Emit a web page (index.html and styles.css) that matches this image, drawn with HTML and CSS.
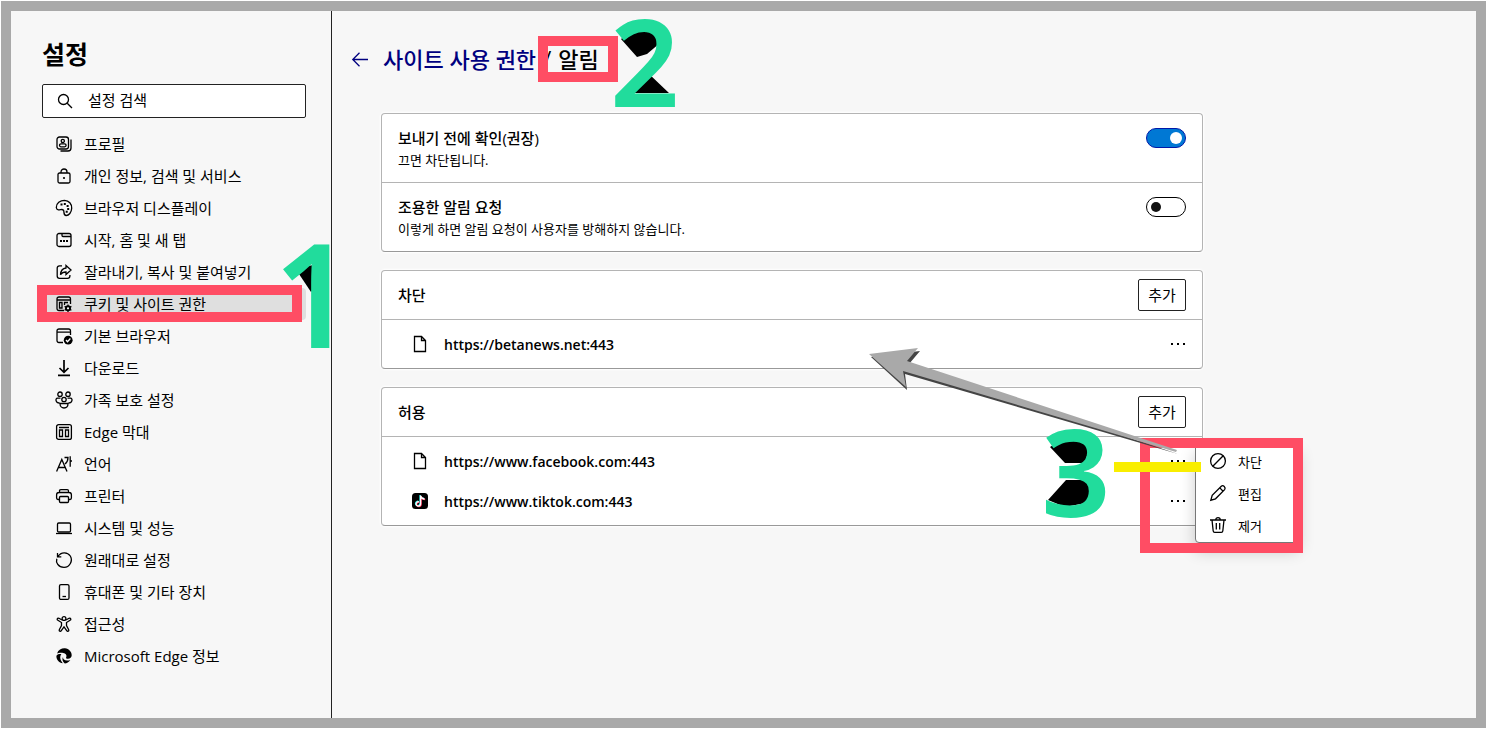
FILE: index.html
```html
<!DOCTYPE html>
<html lang="ko">
<head>
  <meta charset="UTF-8">
  <meta name="viewport" content="width=device-width, initial-scale=1.0">
  <title>설정</title>
  <link rel="stylesheet" href="styles.css">
</head>
<body>
  <div class="page">
    <aside class="sidebar">
      <h1>설정</h1>
      <div class="search">
        <svg class="icon" viewBox="0 0 16 16"><circle cx="6.5" cy="6.5" r="5"/><path d="M10.2 10.2L15 15"/></svg>
        <input type="text" placeholder="설정 검색" aria-label="설정 검색">
      </div>
      <nav class="menu">
        <a href="#"><svg class="icon" viewBox="0 0 16 16"><rect x="1" y="1" width="11.5" height="12" rx="2.5"/><circle cx="6.8" cy="4.9" r="1.6"/><rect x="3.5" y="7.8" width="6.6" height="3" rx="1.5"/><path d="M15 3.5v8.5c0 2-1 3-3 3H4.5"/></svg>프로필</a>
        <a href="#"><svg class="icon" viewBox="0 0 16 16"><rect x="2" y="5" width="12" height="10" rx="1.5"/><path d="M5 5V4c0-4 6-4 6 0v1"/><circle class="solid" cx="8" cy="10" r="1.1"/></svg>개인 정보, 검색 및 서비스</a>
        <a href="#"><svg class="icon" viewBox="0 0 16 16"><path d="M.3 7.5C.1 3 4.300.3 8.500.3c4.500.2 7.400 3.700 7.200 8-.2 4.300-2.900 7.200-5.500 7.200-3.200 0-1.700-3.700-2.700-5.300C6 8.500 4.300 10.200 2.300 9.900 1 9.600.4 8.500.3 7.500z"/><path class="dots" d="M5.500 4.500h.01M8.800 4h.01M11.600 6h.01M12.200 9h.01M10.700 11.800h.01"/></svg>브라우저 디스플레이</a>
        <a href="#"><svg class="icon" viewBox="0 0 16 16"><rect x="1" y="1.5" width="14" height="13" rx="2"/><path d="M6 1.5v2c0 .6.4 1 1 1h8"/><path class="dots" d="M5 9h.01M8 9h.01M11 9h.01"/></svg>시작, 홈 및 새 탭</a>
        <a href="#"><svg class="icon" viewBox="0 0 16 16"><path d="M6 1.8H3.5c-1.500 0-2.300.9-2.300 2.300V12c0 1.500.9 2.400 2.300 2.400h8c1.500 0 2.400-.9 2.400-2.400v-1"/><path d="M10 1.500l5 4.500-5 4.500V8C7.500 8 5.800 8.700 4.500 10.700 4.800 7 6.500 4.300 10 4z"/></svg>잘라내기, 복사 및 붙여넣기</a>
        <a href="#" class="active"><svg class="icon" viewBox="0 0 16 16"><path d="M8 14.500H3c-1.200 0-2-.8-2-2V3c0-1.200.8-2 2-2h9.500c1.200 0 2 .8 2 2v5M1 4h13.500M3.500 6.500h2.500v5.500H3.500zM8.500 9V6.500h3.500"/><circle class="solid" cx="12" cy="12.300" r="3"/><path d="M12 8.500v7.500M8.600 10.400l6.800 3.800M8.600 14.200l6.800-3.800"/><circle class="hole" cx="12" cy="12.300" r="1.100"/></svg>쿠키 및 사이트 권한</a>
        <a href="#"><svg class="icon" viewBox="0 0 16 16"><path d="M7 14.500H3c-1.200 0-2-.8-2-2V3c0-1.200.8-2 2-2h9.500c1.200 0 2 .8 2 2v4M1 4.200h13.500"/><circle class="solid" cx="12.200" cy="12.200" r="4.400"/><path class="tick" d="M10 12l1.500 1.700 2.900-3.200"/></svg>기본 브라우저</a>
        <a href="#"><svg class="icon bold" viewBox="0 0 16 16"><path d="M8 0v12M3.500 8L8 12.300 12.500 8M2 15.400h12"/></svg>다운로드</a>
        <a href="#"><svg class="icon wide" viewBox="0 0 18 18"><circle cx="5" cy="3.200" r="2.200"/><circle cx="13" cy="3.200" r="2.200"/><circle cx="9" cy="8.500" r="2.200"/><path d="M5.500 7.200H2.500C0 7.200.5 12 4.500 12M12.500 7.200h3c2.500 0 2 4.800-2 4.800M5 12.500h8c0 6-8 6-8 0z"/></svg>가족 보호 설정</a>
        <a href="#"><svg class="icon" viewBox="0 0 16 16"><rect x=".6" y=".6" width="14.800" height="14.800" rx="2"/><path d="M3 3.500h10M3.500 6h3v6.500h-3zM9.500 6h3v6.500h-3z"/></svg>Edge 막대</a>
        <a href="#"><svg class="icon" viewBox="0 0 16 16"><path d="M.6 15.500L5.800 3.500 11 15.500M2.500 11.500h6.500M8.500 1.500h3.500c0 3-1 5-3 6.500M14.200.3v10.500M14.200 5H16"/></svg>언어</a>
        <a href="#"><svg class="icon" viewBox="0 0 16 16"><path d="M3.500 4.500V3c0-.8.500-1.300 1.300-1.300h6.400c.8 0 1.300.5 1.300 1.300v1.500M3.500 11.500H2c-.9 0-1.400-.6-1.400-1.400V6.800c0-1.500.8-2.300 2.300-2.300h10.200c1.500 0 2.300.8 2.300 2.300v3.300c0 .8-.5 1.400-1.400 1.400h-1.500"/><rect x="3.500" y="8.500" width="9" height="6" rx="1"/></svg>프린터</a>
        <a href="#"><svg class="icon" viewBox="0 0 16 16"><rect x="1.500" y="3" width="13" height="9" rx="1.200"/><path d="M0 13.500h16"/></svg>시스템 및 성능</a>
        <a href="#"><svg class="icon" viewBox="0 0 16 16"><path d="M1.500 1v3.800h3.800M1.800 4.700C5 -.5 11.500-.3 14.300 4c2.800 4.700-.5 11.400-6.300 11.400S-.4 10.500.8 6.700"/></svg>원래대로 설정</a>
        <a href="#"><svg class="icon" viewBox="0 0 16 16"><rect x="3.500" y=".6" width="9.500" height="14.800" rx="1.500"/><path d="M6.500 12.500h3.500"/></svg>휴대폰 및 기타 장치</a>
        <a href="#"><svg class="icon" viewBox="0 0 16 16"><circle cx="8" cy="2.500" r="1.900"/><path d="M6 4L3 2.300C1.300 1.500.5 3.500 1.900 4.300L5.500 6.500v3L3.300 13.700c-.6 1.500 1.200 2.200 2 .9L8 10.800l2.700 3.800c.8 1.300 2.600.6 2-.9L10.500 9.500v-3l3.600-2.200C15.500 3.500 14.700 1.500 13 2.300L10 4"/></svg>접근성</a>
        <a href="#"><svg class="icon" viewBox="0 0 16 16"><path class="solid" d="M1 5.500C2.500 1.500 6 0 9 .3c4 .4 6.800 3.700 6.700 7-.1 2.300-1.700 3.500-4 3.400-1.500 0-2-.7-1.500-1.500 1-2-.5-4-3-4.300-2.500-.3-5 0-6.200.6zM.4 8c.8-2 3.600-2.300 5-1.700-1.800 1.800-1.600 5.500 1.400 8.900C3 15 .2 11.500.4 8zM7 9c-.3 3 3 4.500 7.300 3-1.500 2.300-3.500 3.500-5.500 3.600C6.500 13.500 5.800 11 7 9z"/></svg>Microsoft Edge 정보</a>
      </nav>
    </aside>

    <main class="content">
      <header class="breadcrumb">
        <button type="button" class="back" aria-label="뒤로"><svg class="icon" viewBox="0 0 16 16"><path d="M16 7.500H.8M7.500.8L.8 7.500l6.700 6.700"/></svg></button>
        <a href="#">사이트 사용 권한</a>
        <span>/</span>
        <h2>알림</h2>
      </header>

      <section class="card">
        <div class="setting">
          <label for="ask">보내기 전에 확인(권장)<small>끄면 차단됩니다.</small></label>
          <input type="checkbox" class="toggle" id="ask" checked>
        </div>
        <div class="setting">
          <label for="quiet">조용한 알림 요청<small>이렇게 하면 알림 요청이 사용자를 방해하지 않습니다.</small></label>
          <input type="checkbox" class="toggle" id="quiet">
        </div>
      </section>

      <section class="card">
        <div class="card-head">
          <h3>차단</h3>
          <button type="button" class="add">추가</button>
        </div>
        <ul class="sites">
          <li>
            <svg class="icon" viewBox="0 0 16 16"><path d="M2.500.5h7l4 4v11h-11zM9.500.5v4h4"/></svg>
            <span>https://betanews.net:443</span>
            <button type="button" class="more" aria-label="기타 작업"><svg class="icon" viewBox="0 0 16 16"><path class="dots" d="M2 8h.01M8 8h.01M14 8h.01"/></svg></button>
          </li>
        </ul>
      </section>

      <section class="card">
        <div class="card-head">
          <h3>허용</h3>
          <button type="button" class="add">추가</button>
        </div>
        <ul class="sites">
          <li>
            <svg class="icon" viewBox="0 0 16 16"><path d="M2.500.5h7l4 4v11h-11zM9.500.5v4h4"/></svg>
            <span>https://www.facebook.com:443</span>
            <button type="button" class="more" aria-label="기타 작업"><svg class="icon" viewBox="0 0 16 16"><path class="dots" d="M2 8h.01M8 8h.01M14 8h.01"/></svg></button>
          </li>
          <li>
            <svg class="icon tiktok" viewBox="0 0 16 16"><rect width="16" height="16" rx="3.500"/><path class="cyan" d="M8 2v8.300c0 3-4.700 2.900-4.500.1.100-1.500 1.400-2.300 2.800-2.100M8 2.500c.5 2 1.900 2.900 4 3"/><path class="red" d="M9.200 3v8.300c0 3-4.700 2.900-4.500.1.100-1.500 1.400-2.300 2.800-2.100M9.200 3.500c.5 2 1.900 2.900 4 3"/><path class="white" d="M8.600 2.500v8.300c0 3-4.700 2.900-4.500.1.100-1.500 1.400-2.300 2.800-2.100M8.600 3c.5 2 1.900 2.900 4 3"/></svg>
            <span>https://www.tiktok.com:443</span>
            <button type="button" class="more" aria-label="기타 작업"><svg class="icon" viewBox="0 0 16 16"><path class="dots" d="M2 8h.01M8 8h.01M14 8h.01"/></svg></button>
          </li>
        </ul>
      </section>
    </main>

    <div class="popup">
      <button type="button"><svg class="icon" viewBox="0 0 16 16"><circle cx="8" cy="8" r="7.400"/><path d="M2.800 13.200L13.200 2.800"/></svg>차단</button>
      <button type="button"><svg class="icon" viewBox="0 0 16 16"><path d="M11.300 1.300c1.800-1.700 5 1 3.300 3.400L5.500 13.800.8 15.200l1.400-4.800zM9.800 2.900l3.300 3.300"/></svg>편집</button>
      <button type="button"><svg class="icon" viewBox="0 0 16 16"><path d="M0 3h16M5.700 3c0-3.300 4.600-3.300 4.600 0M2 3l1.200 11c.1.900.6 1.400 1.500 1.400h6.600c.9 0 1.400-.5 1.500-1.400L14 3M6.300 6v6.500M9.700 6v6.500"/></svg>제거</button>
    </div>

    <!-- guide marks drawn over the page -->
    <div class="mark mark-menu"></div>
    <div class="mark mark-title"></div>
    <div class="mark mark-popup"></div>
    <div class="underline"></div>
    <svg class="arrow" viewBox="0 0 310 106">
      <path class="arrow-shade" d="M2 9L51 3 40 16 309 106 36 26 38 42z"/>
      <path class="arrow-body" d="M0 6L49 0 38 13 308 102 307 104 34 23 37 39z"/>
    </svg>
    <svg class="shade shade-one" viewBox="0 0 37 104"><path d="M1 23L17 47 20 44V20z"/></svg>
    <svg class="shade shade-two" viewBox="0 0 54 90"><path d="M6 21L22 39 32 36 45 25 40 10 20 10zM33 55L54 75H15z"/></svg>
    <svg class="shade shade-three" viewBox="0 0 54 91"><path d="M5 20L20 36H40L46 14 24 8zM3 73L21 53H40L46 60V75L20 80z"/></svg>
    <div class="step step-one">1</div>
    <div class="step step-two">2</div>
    <div class="step step-three">3</div>
  </div>
</body>
</html>
```
FILE: styles.css
```css
* {
  box-sizing: border-box;
}
body {
  margin: 0;
  padding: 1px;
  background: #fff;
  color: #000;
  font-family: "Open Sans", "Noto Sans CJK KR", sans-serif;
  font-size: 15px;
}
h1, h2, h3, ul {
  margin: 0;
  padding: 0;
}
a {
  color: inherit;
  text-decoration: none;
}
button {
  font: inherit;
  color: inherit;
  cursor: pointer;
}

.page {
  position: relative;
  display: flex;
  min-height: calc(100vh - 2px);
  border: 10px solid #a9a9a9;
  background: #f7f7f7;
}

.icon {
  flex: none;
  width: 16px;
  height: 16px;
  overflow: visible;
  fill: none;
  stroke: currentColor;
  stroke-width: 1.3;
}
.icon.wide {
  width: 18px;
  height: 18px;
  margin: 0 -1px;
}
.icon.bold {
  stroke-width: 1.7;
}
.icon .solid {
  fill: currentColor;
  stroke: none;
}
.icon .hole {
  fill: #fff;
  stroke: none;
}
.icon .tick {
  stroke: #fff;
}
.icon .dots {
  stroke-width: 2;
  stroke-linecap: square;
}

.sidebar {
  flex: none;
  width: 321px;
  padding: 24px 25px 0 31px;
  border-right: 1px solid #222;
}
.sidebar h1 {
  font-size: 25px;
  line-height: 38px;
}
.search {
  display: flex;
  align-items: center;
  gap: 15px;
  height: 34px;
  margin-top: 11px;
  padding: 0 14px;
  border: 1px solid #222;
  border-radius: 2px;
  background: #fff;
}
.search input {
  flex: 1;
  min-width: 0;
  padding: 0 0 2px;
  border: 0;
  background: none;
  font: inherit;
}
.search input::placeholder {
  color: #000;
}
.menu {
  margin-top: 10px;
}
.menu a {
  display: flex;
  align-items: center;
  gap: 12px;
  height: 32px;
  padding: 0 14px 2px;
  border-radius: 4px;
}
.menu .icon {
  margin-top: 2px;
}
.menu .active {
  background: #dfdfdf;
}

.content {
  flex: 1;
  min-width: 0;
  padding: 32px 49px 40px;
}
.breadcrumb {
  display: flex;
  align-items: center;
  gap: 7px;
  height: 30px;
  margin: 0 0 40px -29px;
  font-size: 22px;
  font-weight: 500;
}
.breadcrumb a, .back {
  color: #00007f;
}
.breadcrumb h2 {
  font-size: inherit;
  font-weight: 500;
}
.back {
  display: flex;
  margin-right: 8px;
  padding: 4px 0 0;
  border: 0;
  background: none;
}

.card {
  max-width: 822px;
  margin-bottom: 18px;
  border: 1px solid #b4b4b4;
  border-bottom-color: #999;
  border-radius: 4px;
  background: #fff;
  box-shadow: 0 0 2px 1px #fff;
}
.setting {
  display: flex;
  justify-content: space-between;
  padding: 14px 16px 12px;
}
.setting + .setting {
  border-top: 1px solid #b4b4b4;
}
.setting label {
  font-weight: 500;
  line-height: 20px;
}
.setting small {
  display: block;
  padding-top: 2px;
  font-size: 13px;
  font-weight: 400;
}
.toggle {
  appearance: none;
  flex: none;
  display: flex;
  align-items: center;
  width: 40px;
  height: 20px;
  margin: 0;
  padding: 0 4px;
  border: 1px solid #000;
  border-radius: 10px;
  background: #fff;
}
.toggle::before {
  content: "";
  width: 10px;
  height: 10px;
  border-radius: 50%;
  background: #111;
}
.toggle:checked {
  justify-content: flex-end;
  padding: 0 3px;
  border-color: #0018a8;
  background: #0078d4;
}
.toggle:checked::before {
  width: 12px;
  height: 12px;
  background: #fff;
}

.card-head {
  display: flex;
  align-items: center;
  justify-content: space-between;
  padding: 8px 16px;
  border-bottom: 1px solid #b4b4b4;
}
.card-head h3 {
  padding-bottom: 2px;
  font-size: 15px;
  font-weight: 500;
}
.add {
  width: 48px;
  height: 32px;
  padding: 0 0 2px;
  border: 1px solid #222;
  border-radius: 2px;
  background: #fff;
}
.sites {
  padding: 4px 16px 4px 30px;
  list-style: none;
}
.sites li {
  display: flex;
  align-items: center;
  gap: 16px;
  height: 40px;
  font-size: 14px;
  font-weight: 600;
}
.more {
  display: flex;
  margin-left: auto;
  padding: 0;
  border: 0;
  background: none;
}
.tiktok rect {
  fill: #000;
  stroke: none;
}
.tiktok .cyan {
  stroke: #25f4ee;
}
.tiktok .red {
  stroke: #fe2c55;
}
.tiktok .white {
  stroke: #fff;
}

/* context menu of the first allowed site */
.popup {
  position: absolute;
  top: 433px;
  left: 1184px;
  width: 104px;
  padding-bottom: 1px;
  border: 1px solid #777;
  border-radius: 4px;
  background: #fff;
  box-shadow: 0 8px 16px rgba(0, 0, 0, 0.2);
}
.popup button {
  display: flex;
  align-items: center;
  gap: 12px;
  width: 100%;
  height: 32px;
  padding: 0 14px;
  border: 0;
  background: none;
  font-size: 13px;
}

.mark {
  position: absolute;
  border: 10px solid #ff4d64;
  pointer-events: none;
}
.mark-menu {
  top: 274px;
  left: 26px;
  width: 265px;
  height: 37px;
}
.mark-title {
  top: 25px;
  left: 527px;
  width: 80px;
  height: 46px;
}
.mark-popup {
  top: 427px;
  left: 1129px;
  width: 163px;
  height: 115px;
}
.underline {
  position: absolute;
  top: 451px;
  left: 1103px;
  width: 87px;
  height: 10px;
  background: #f9ee00;
}
.arrow {
  position: absolute;
  top: 337px;
  left: 858px;
  width: 310px;
  height: 106px;
  pointer-events: none;
}
.arrow-shade {
  fill: #444;
}
.arrow-body {
  fill: #a9a9a9;
}

.step, .shade {
  position: absolute;
  pointer-events: none;
}
.step {
  color: #21dc9c;
  font-family: "Noto Sans", sans-serif;
  font-size: 122px;
  font-weight: 600;
  line-height: 1;
}
.step-one {
  top: 209px;
  left: 262px;
  font-size: 144px;
}
.step-two {
  top: -12px;
  left: 599px;
}
.step-three {
  top: 398px;
  left: 1030px;
}
.shade-one {
  top: 234px;
  left: 283px;
  width: 37px;
  height: 104px;
}
.shade-two {
  top: 7px;
  left: 604px;
  width: 54px;
  height: 90px;
}
.shade-three {
  top: 416px;
  left: 1034px;
  width: 54px;
  height: 91px;
}
```
